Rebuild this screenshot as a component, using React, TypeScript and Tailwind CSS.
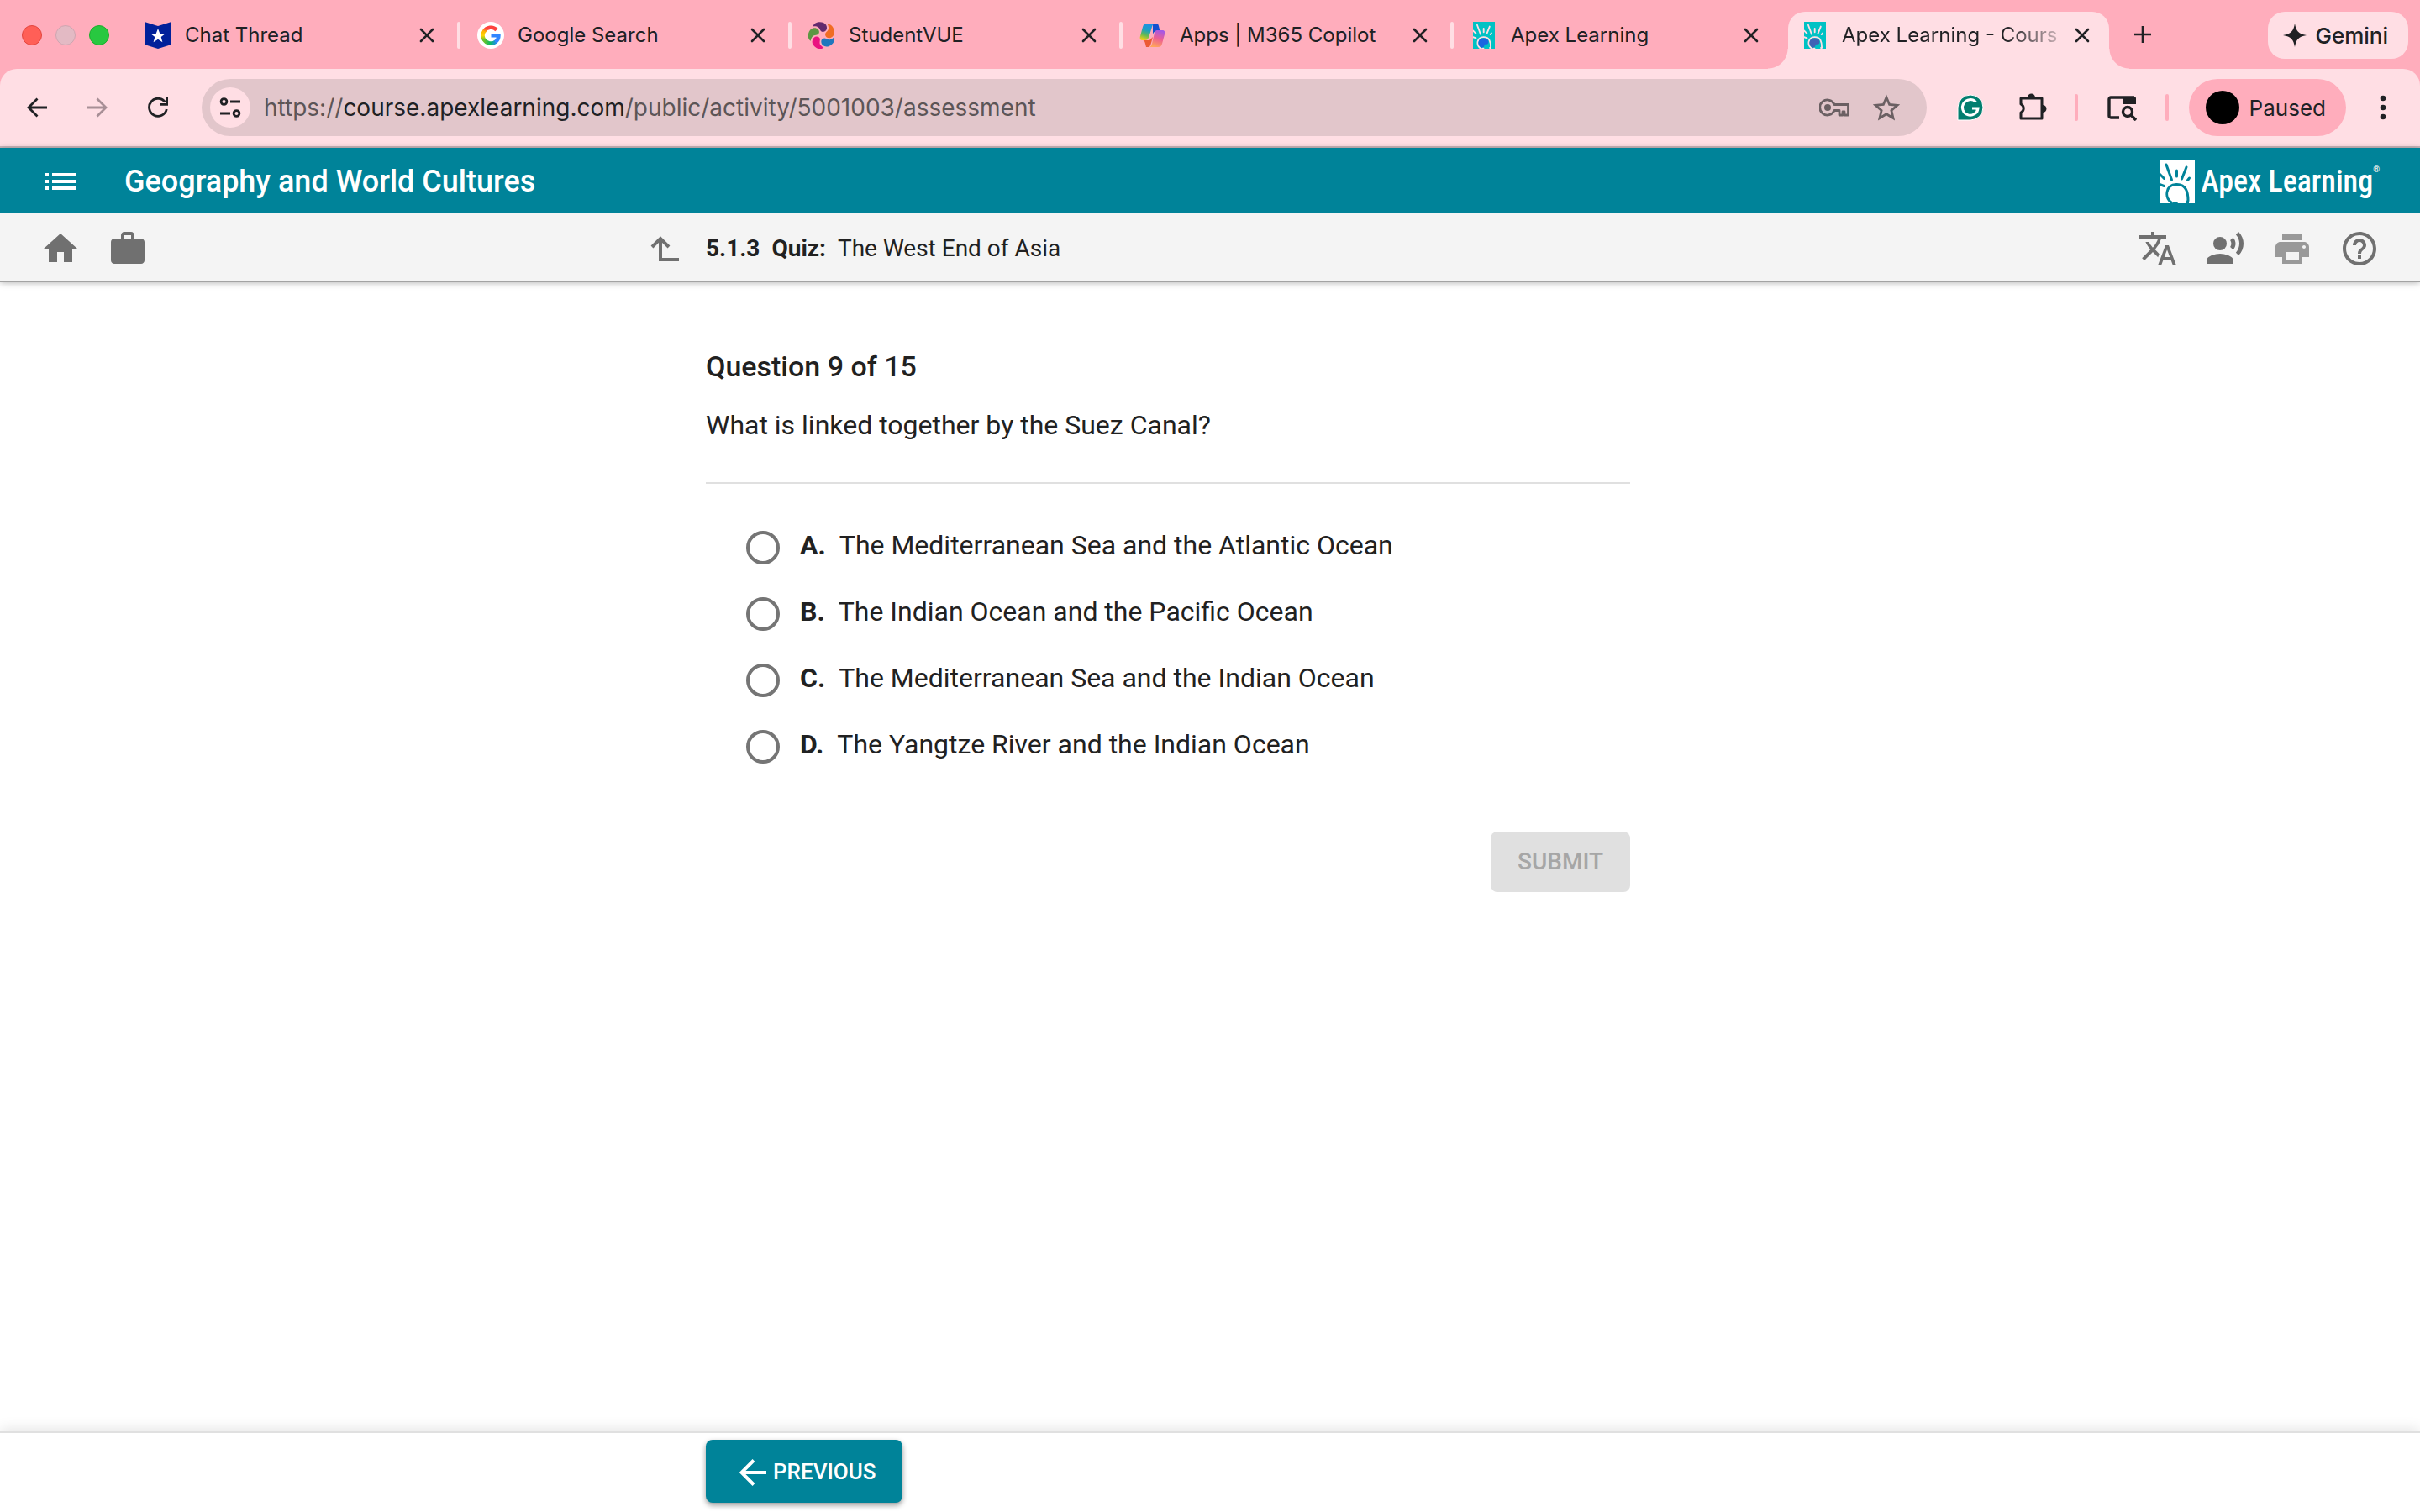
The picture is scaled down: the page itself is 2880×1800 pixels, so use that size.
import { useState } from "react";
import type { ReactNode } from "react";
import { clsx } from "clsx";
import {
  MdHelpOutline,
  MdHome,
  MdPrint,
  MdRecordVoiceOver,
  MdTranslate,
  MdWork,
} from "react-icons/md";

const SchoolIcon = () => (
  <svg viewBox="0 0 32 32" className="size-8">
    <path d="M0 0l16 5L32 0v27l-16 5L0 27z" fill="#00209a" />
    <path d="M16 8l2.3 5.9 6.2.3-4.8 3.9 1.7 6.1L16 20.8l-5.4 3.4 1.7-6.1-4.8-3.9 6.2-.3z" fill="#fff" />
  </svg>
);

const GoogleIcon = () => (
  <svg viewBox="0 0 32 32" className="size-8">
    <defs>
      <linearGradient id="gTop" x1="0" y1="1" x2="1" y2="0">
        <stop offset="0" stopColor="#ffb300" />
        <stop offset=".45" stopColor="#ff4641" />
        <stop offset="1" stopColor="#fc413d" />
      </linearGradient>
      <linearGradient id="gLeft" x1="0" y1="0" x2="0" y2="1">
        <stop offset="0" stopColor="#ffb300" />
        <stop offset=".5" stopColor="#ffd500" />
        <stop offset="1" stopColor="#6cc22c" />
      </linearGradient>
      <linearGradient id="gBottom" x1="0" y1="0" x2="1" y2="0">
        <stop offset="0" stopColor="#6cc22c" />
        <stop offset=".5" stopColor="#0ebc5f" />
        <stop offset="1" stopColor="#1d90e0" />
      </linearGradient>
    </defs>
    <circle cx="16" cy="16" r="16" fill="#fff" />
    <g fill="none" strokeWidth="4.6">
      <path d="M8 11.5A9.500 9.500 0 0 1 23 9.600" stroke="url(#gTop)" />
      <path d="M8.200 11A9.500 9.500 0 0 0 8.200 21.500" stroke="url(#gLeft)" />
      <path d="M8 21a9.500 9.500 0 0 0 14 2.600" stroke="url(#gBottom)" />
      <path d="M21.600 24A9.500 9.500 0 0 0 25.400 16.300H16.500" stroke="#3186ff" />
    </g>
  </svg>
);

const petal = "M5.500 5.500C7-1 18-1.500 21 3.500c2.500 4.500 0 8.500-3.500 8.500-4 0-3-5-7-6.300-2-.6-3.500-.4-5-.2z";

const StudentVueIcon = () => (
  <svg viewBox="0 0 32 32" className="size-8">
    <path d={petal} fill="#632a6d" />
    <path d={petal} fill="#f06c23" transform="rotate(72 16 16)" />
    <path d={petal} fill="#1f77bd" transform="rotate(144 16 16)" />
    <path d={petal} fill="#ea1380" transform="rotate(216 16 16)" />
    <path d={petal} fill="#5c9742" transform="rotate(288 16 16)" />
  </svg>
);

const CopilotIcon = () => (
  <svg viewBox="0 0 32 32" className="size-8">
    <defs>
      <linearGradient id="cpLeft" x1=".6" y1="0" x2=".3" y2="1">
        <stop offset="0" stopColor="#1c8fe8" />
        <stop offset=".4" stopColor="#1b9fc4" />
        <stop offset=".7" stopColor="#62b955" />
        <stop offset="1" stopColor="#f2cf18" />
      </linearGradient>
      <linearGradient id="cpRight" x1=".7" y1="0" x2=".4" y2="1">
        <stop offset="0" stopColor="#a257e8" />
        <stop offset=".5" stopColor="#ee5f92" />
        <stop offset="1" stopColor="#ffa65a" />
      </linearGradient>
    </defs>
    <path d="M16 2h4c2 0 2.600 1 3 3l1.500 6H21c-3 0-4 1-5 4z" fill="#1450cf" />
    <path d="M8 30l-1-4c-1-3-1-4-3-4h8l4-4-2 7c-1 4-2 5-4 5z" fill="#ec5a35" />
    <path d="M9 2h10c-2 0-3 1-4 4l-4 13c-1 2-2 3-4 3H4c-3 0-4-2-3-5L4 6c1-3 2-4 5-4z" fill="url(#cpLeft)" />
    <path d="M21 10h6c3 0 4 2 3 5l-3 11c-1 3-2 4-5 4H11c2 0 3-1 4-4l3-13c1-2 1-3 3-3z" fill="url(#cpRight)" />
  </svg>
);

type ApexMarkProps = { className: string; ground: string; ray: string; head: string };

const ApexMark = ({ className, ground, ray, head }: ApexMarkProps) => (
  <svg viewBox="0 0 42 52" preserveAspectRatio="none" className={className}>
    <path d="M0 0h42v52H0z" fill={ground} />
    <g stroke={ray} strokeWidth="3" strokeLinecap="round" fill="none">
      <path d="M8 6l6.500 18M20.500 13v7M32 9l-5.500 14M35.500 22l-2 2.500" />
      <path d="M0 17l5.500 5.500M0 29.500l5.500 2" />
      <path d="M14 51C6 45 7 30 20 29.500c12-.5 14 10 14 19.500" />
    </g>
    <path
      d="M20.500 31.500c7 0 10.500 4.500 9 9.500-1 2-2 2.500-5 2.500-2 0-2.500 1-3 3 0 2-1 2.500-2.500 2.500-2 3-10-2.500-8.500-10 1-5 5-7.500 10-7.500z"
      fill={head}
    />
    <path d="M14 52c3-1 4-3 7-1.500l1 1.500zM31 49l4-1v4h-3.500z" fill={ray} />
  </svg>
);

const tabs = [
  { title: "Chat Thread", icon: <SchoolIcon /> },
  { title: "Google Search", icon: <GoogleIcon /> },
  { title: "StudentVUE", icon: <StudentVueIcon /> },
  { title: "Apps | M365 Copilot", icon: <CopilotIcon /> },
  {
    title: "Apex Learning",
    icon: <ApexMark className="h-8 w-[26px]" ground="#00c2c4" ray="#ffdee4" head="#1a66e0" />,
  },
  {
    title: "Apex Learning - Cours",
    icon: <ApexMark className="h-8 w-[26px]" ground="#00c2c4" ray="#ffdee4" head="#3f63b5" />,
    active: true,
  },
];

const choices = [
  { letter: "A.", text: "The Mediterranean Sea and the Atlantic Ocean" },
  { letter: "B.", text: "The Indian Ocean and the Pacific Ocean" },
  { letter: "C.", text: "The Mediterranean Sea and the Indian Ocean" },
  { letter: "D.", text: "The Yangtze River and the Indian Ocean" },
];

type TabProps = { title: string; icon: ReactNode; active?: boolean; first: boolean };

function Tab({ title, icon, active, first }: TabProps) {
  return (
    <div className="relative flex h-full w-[394px] shrink items-center pr-[26px]">
      {active && (
        <div className="absolute top-3 right-1 bottom-0 left-2 rounded-t-[20px] bg-[#ffdee4]">
          <span className="absolute bottom-0 -left-6 size-6 bg-[radial-gradient(circle_at_0_0,transparent_23px,#ffdee4_24px)]" />
          <span className="absolute -right-6 bottom-0 size-6 bg-[radial-gradient(circle_at_100%_0,transparent_23px,#ffdee4_24px)]" />
        </div>
      )}
      <span
        className={clsx("h-8 shrink-0 rounded-full", first ? "w-0.5" : "w-1", !first && !active && "bg-[#ffdee4]")}
      />
      <span className="relative ml-5 flex w-8 shrink-0 justify-center">{icon}</span>
      <span className="relative ml-4 flex min-w-0 grow">
        <span
          className={clsx(
            "text-2xl whitespace-nowrap",
            active && "bg-linear-to-r from-[#202124] from-75% to-[#20212440] bg-clip-text text-transparent",
          )}
        >
          {title}
        </span>
      </span>
      <button aria-label={`Close ${title}`} className="relative shrink-0">
        <svg viewBox="0 0 20 20" className="size-5" stroke="currentColor" strokeWidth="2.6" strokeLinecap="round">
          <path d="M3 3l14 14M17 3L3 17" />
        </svg>
      </button>
    </div>
  );
}

function TabStrip() {
  return (
    <div className="flex h-[82px] items-center bg-[#ffadbc] pt-0.5 pr-3.5 pl-[26px]">
      <div className="flex w-[124px] shrink-0 gap-4">
        <span className="size-6 rounded-full border border-[#e2463f] bg-[#ff5f57]" />
        <span className="size-6 rounded-full border border-[#cfa5b0] bg-[#e3bac4]" />
        <span className="size-6 rounded-full border border-[#1dad2c] bg-[#28c840]" />
      </div>
      <div className="flex h-full min-w-0">
        {tabs.map((tab, i) => (
          <Tab key={tab.title} {...tab} first={i === 0} />
        ))}
      </div>
      <button aria-label="New tab" className="ml-6 shrink-0">
        <svg viewBox="0 0 24 24" className="size-6" stroke="currentColor" strokeWidth="2.6">
          <path d="M12 1v20M2 11h20" />
        </svg>
      </button>
      <button className="ml-auto flex h-14 shrink-0 items-center gap-2.5 rounded-[20px] bg-[#ffdee4] pr-6 pl-[18px] text-[26px] font-medium">
        <svg viewBox="0 0 28 28" className="size-7" fill="currentColor">
          <path d="M14 0c1.500 9 4.500 12.500 14 14-9.500 1.500-12.500 5-14 14-1.500-9-4.500-12.500-14-14C9.500 12.500 12.500 9 14 0z" />
        </svg>
        Gemini
      </button>
    </div>
  );
}

function Toolbar() {
  return (
    <div className="bg-[#ffadbc]">
      <div className="flex h-[94px] items-center rounded-t-[20px] border-b-2 border-[#c9b5ba] bg-[#ffdee4] pr-10 pl-8">
        <div className="flex shrink-0 gap-12">
          <button aria-label="Back">
            <svg viewBox="0 0 24 24" className="size-6" fill="none" stroke="currentColor" strokeWidth="2.8">
              <path d="M24 12H2M12.500 1.500L2 12l10.500 10.500" />
            </svg>
          </button>
          <button aria-label="Forward" className="text-[#a88f96]">
            <svg viewBox="0 0 24 24" className="size-6" fill="none" stroke="currentColor" strokeWidth="2.8">
              <path d="M0 12h22M11.500 1.500L22 12 11.500 22.500" />
            </svg>
          </button>
          <button aria-label="Reload">
            <svg viewBox="0 0 24 24" className="size-6" fill="none" stroke="currentColor" strokeWidth="2.8">
              <path d="M20.500 5.500A10.500 10.500 0 1 0 22.300 14M22.600 0v8.400H14" />
            </svg>
          </button>
        </div>
        <div className="ml-10 flex h-[68px] grow items-center rounded-full bg-[#e2c6cb] pr-8 pl-2.5">
          <button
            aria-label="Site information"
            className="flex size-12 shrink-0 items-center justify-center rounded-full bg-[#ffdee4]"
          >
            <svg viewBox="0 0 26 26" className="size-[26px]" fill="none" stroke="currentColor" strokeWidth="2.8">
              <circle cx="5.500" cy="6" r="3.400" />
              <circle cx="20.500" cy="20" r="3.400" />
              <path d="M13 6h12M1 20h12" />
            </svg>
          </button>
          <p className="ml-4 grow text-[28px] text-[#5c5557]">
            https://<span className="text-[#202124]">course.apexlearning.com</span>
            /public/activity/5001003/assessment
          </p>
          <button aria-label="Passwords" className="text-[#6b6063]">
            <svg viewBox="0 0 36 24" className="h-6 w-9" fill="none" stroke="currentColor" strokeWidth="2.8">
              <path d="M18 8.500a9 9 0 1 0 0 7h6V21h4v-4h2v4h4.500V8.500z" strokeLinejoin="round" />
              <circle cx="10" cy="12" r="4" fill="currentColor" stroke="none" />
            </svg>
          </button>
          <button aria-label="Bookmark" className="ml-7 text-[#6b6063]">
            <svg viewBox="0 0 32 32" className="size-8" fill="none" stroke="currentColor" strokeWidth="2.8">
              <path d="M16 4l3.600 8.500 9.400.8-7.100 6.200 2.100 9.100-8-4.900-8 4.900 2.100-9.100L3 13.300l9.400-.8z" />
            </svg>
          </button>
        </div>
        <button aria-label="Grammarly" className="ml-9 shrink-0">
          <svg viewBox="0 0 32 32" className="size-8">
            <path d="M1 31V16a15 15 0 1 1 15 15z" fill="#027e6f" stroke="#fff" />
            <path d="M22.500 9.500A9.300 9.300 0 1 0 25 17h-7M24 16.500v5" fill="none" stroke="#fff" strokeWidth="3" />
          </svg>
        </button>
        <button aria-label="Extensions" className="ml-10 shrink-0">
          <svg viewBox="0 0 36 36" className="size-9" fill="none" stroke="currentColor" strokeWidth="3" strokeLinejoin="round">
            <path d="M4 7h25v24H4v-7a5.500 5.500 0 0 0 0-10z" />
            <path d="M12 6a4.500 4.500 0 0 1 9 0zM30 15a4.500 4.500 0 0 1 0 9z" fill="currentColor" stroke="none" />
          </svg>
        </button>
        <span className="ml-8 h-8 w-1 shrink-0 rounded-full bg-[#ffadbc]" />
        <button aria-label="Search side panel" className="ml-[34px] shrink-0">
          <svg viewBox="0 0 36 32" className="h-8 w-9" fill="none" stroke="currentColor" strokeWidth="3.4">
            <path d="M15 28H5a2 2 0 0 1-2-2V6a2 2 0 0 1 2-2h28" />
            <path d="M19 3h14a2 2 0 0 1 2 2v7H19z" fill="currentColor" stroke="none" />
            <circle cx="25" cy="21" r="5.500" />
            <path d="M29 25l6 6" />
          </svg>
        </button>
        <span className="ml-[34px] h-8 w-1 shrink-0 rounded-full bg-[#ffadbc]" />
        <button className="ml-6 flex h-[68px] shrink-0 items-center gap-3 rounded-full bg-[#ffadbc] pr-6 pl-5 text-[26px]">
          <span className="size-10 rounded-full bg-black" />
          Paused
        </button>
        <button aria-label="Menu" className="ml-10 shrink-0">
          <svg viewBox="0 0 8 32" className="h-8 w-2" fill="currentColor">
            <circle cx="4" cy="5" r="3.300" />
            <circle cx="4" cy="16" r="3.300" />
            <circle cx="4" cy="27" r="3.300" />
          </svg>
        </button>
      </div>
    </div>
  );
}

function CourseHeader() {
  return (
    <header className="relative bg-[#f4f4f4] shadow-[0_2px_0_#a3a3a3,0_2px_8px_rgba(0,0,0,0.35)]">
      <div className="flex h-[78px] items-center bg-[#008399] pt-0.5 pr-12 pl-[54px] text-white">
        <button aria-label="Course menu">
          <svg viewBox="0 0 36 20" className="h-5 w-9" fill="currentColor">
            <path d="M0 0h4v4H0zM0 8h4v4H0zM0 16h4v4H0zM8 0h28v4H8zM8 8h28v4H8zM8 16h28v4H8z" />
          </svg>
        </button>
        <h1 className="ml-[58px] text-4xl font-medium">Geography and World Cultures</h1>
        <a href="#apex" className="ml-auto flex items-center gap-2">
          <ApexMark className="h-[52px] w-[42px]" ground="#fff" ray="#008399" head="#fff" />
          <span className="flex items-start font-['Roboto_Condensed','Liberation_Sans_Narrow',sans-serif] text-4xl font-medium">
            Apex Learning
            <span className="text-[10px]">®</span>
          </span>
        </a>
      </div>
      <div className="grid h-20 grid-cols-[1fr_1200px_1fr] items-center pt-1 text-[#707070]">
        <nav className="flex gap-8 pl-12">
          <button aria-label="Home">
            <MdHome className="size-12" />
          </button>
          <button aria-label="Portfolio">
            <MdWork className="size-12" />
          </button>
        </nav>
        <div className="-ml-[66px] flex items-center">
          <button aria-label="Up one level">
            <svg viewBox="0 0 34 30" className="h-[30px] w-[34px]" fill="none" stroke="currentColor" strokeWidth="4">
              <path d="M34 28H12V3M2 13L12 3l10 10" />
            </svg>
          </button>
          <h2 className="ml-8 flex gap-3.5 text-[28px] text-[#212121]">
            <span className="font-bold">5.1.3</span>
            <span className="font-bold">Quiz:</span>
            <span>The West End of Asia</span>
          </h2>
        </div>
        <div className="flex justify-end gap-8 pr-12">
          <button aria-label="Translate">
            <MdTranslate className="size-12" />
          </button>
          <button aria-label="Read aloud">
            <MdRecordVoiceOver className="size-12" />
          </button>
          <button aria-label="Print" className="text-[#999999]">
            <MdPrint className="size-12" />
          </button>
          <button aria-label="Help">
            <MdHelpOutline className="size-12" />
          </button>
        </div>
      </div>
    </header>
  );
}

export default function App() {
  const [answer, setAnswer] = useState("");

  return (
    <div className="flex min-h-screen flex-col bg-white font-['Roboto',sans-serif] text-[#212121]">
      <div className="font-['Inter',sans-serif] text-[#202124]">
        <TabStrip />
        <Toolbar />
      </div>
      <CourseHeader />

      <main className="mx-auto w-full max-w-[1200px] grow pt-20 pr-[100px]">
        <h3 className="text-[34px] leading-[44px] font-medium">Question 9 of 15</h3>
        <p className="mt-7 text-[32px] leading-10">What is linked together by the Suez Canal?</p>
        <hr className="mt-12 border-t-2 border-[#e0e0e0]" />
        <form className="flex flex-col" onSubmit={(e) => e.preventDefault()}>
          <fieldset aria-label="Answer choices" className="mt-9 pl-12">
            {choices.map(({ letter, text }) => (
              <label key={letter} className="flex h-[79px] items-center text-[32px]">
                <input
                  type="radio"
                  name="answer"
                  value={letter}
                  checked={answer === letter}
                  onChange={() => setAnswer(letter)}
                  className="size-10 appearance-none rounded-full border-4 border-[#757575] checked:border-[12px] checked:border-[#008399]"
                />
                <span className="ml-6 pb-1.5 font-bold">{letter}</span>
                <span className="ml-4 pb-1.5">{text}</span>
              </label>
            ))}
          </fieldset>
          <button
            type="submit"
            disabled={!answer}
            className="mt-[62px] h-[72px] self-end rounded-lg bg-[#008399] px-8 text-[28px] font-medium text-white disabled:bg-[#e0e0e0] disabled:text-[#a6a6a6]"
          >
            SUBMIT
          </button>
        </form>
      </main>

      <footer className="border-t-2 border-[#e0e0e0] shadow-[0_-2px_16px_rgba(0,0,0,0.12)]">
        <div className="mx-auto w-full max-w-[1200px] pt-2 pb-[11px]">
          <button className="flex h-[75px] items-center gap-2 rounded-lg bg-[#008399] pt-0.5 pr-8 pl-10 text-[26px] font-medium text-white shadow-[0_3px_6px_rgba(0,0,0,0.4)]">
            <svg viewBox="0 0 32 32" className="size-8" fill="none" stroke="currentColor" strokeWidth="4">
              <path d="M32 16H3M17 1.500L2.500 16 17 30.500" />
            </svg>
            PREVIOUS
          </button>
        </div>
      </footer>
    </div>
  );
}
